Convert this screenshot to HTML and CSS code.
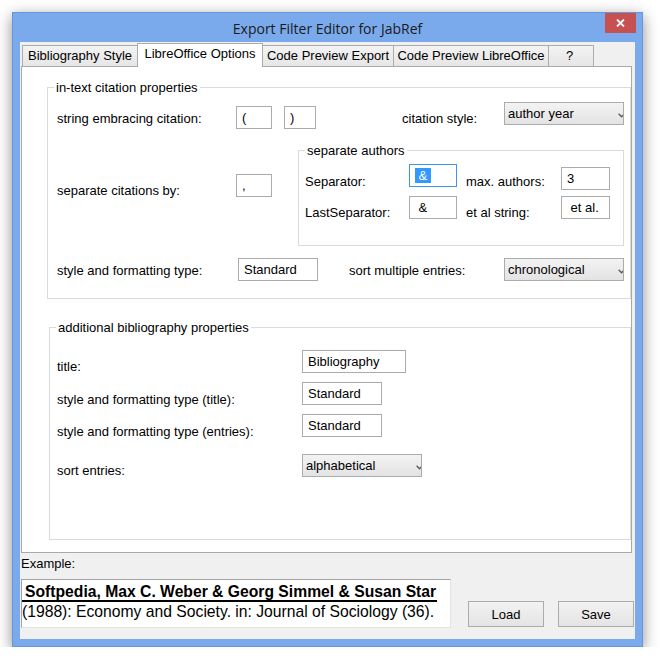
FILE: index.html
```html
<!DOCTYPE html>
<html>
<head>
<meta charset="utf-8">
<title>Export Filter Editor for JabRef</title>
<link rel="stylesheet" href="styles.css">
</head>
<body>
<div class="window">
  <div class="titlebar">
    <div></div>
    <div class="title">Export Filter Editor for JabRef</div>
    <div class="tb-right">
      <div class="close"><svg width="9" height="8" viewBox="0 0 9 8"><path d="M1 0.5 L8 7.5 M8 0.5 L1 7.5" stroke="#fff" stroke-width="1.8" fill="none"/></svg></div>
    </div>
  </div>
  <div class="client">
    <div class="tabs">
      <div class="tab t1">Bibliography Style</div>
      <div class="tab t2 active">LibreOffice Options</div>
      <div class="tab t3">Code Preview Export</div>
      <div class="tab t4">Code Preview LibreOffice</div>
      <div class="tab t5">?</div>
    </div>
    <div class="panel">
      <div class="group g1">
        <div class="legend">in-text citation properties</div>
        <div class="row ra">
          <div class="lbl w179 mt9">string embracing citation:</div>
          <div class="in w36 mt4">(</div>
          <div class="in w32 mt4 ml12">)</div>
          <div class="lbl w102 ml86 mt9">citation style:</div>
          <div class="sel"><span class="sel-text">author year</span><svg class="chev" width="7" height="5" viewBox="0 0 7 5"><path d="M0.6 0.8 L3.5 3.8 L6.4 0.8" stroke="#5a5a5a" stroke-width="1.3" fill="none"/></svg></div>
        </div>
        <div class="row rb">
          <div class="lbl w179 mt33">separate citations by:</div>
          <div class="in w36 mt24">,</div>
          <div class="group sub">
            <div class="legend">separate authors</div>
            <div class="srow s1">
              <div class="lbl w104 mt10">Separator:</div>
              <div class="in w48 focus"><span class="hl"> &amp; </span></div>
              <div class="lbl w95 ml9 mt10">max. authors:</div>
              <div class="in w49 mt3">3</div>
            </div>
            <div class="srow s2">
              <div class="lbl w104 mt9">LastSeparator:</div>
              <div class="in w48"> &amp;</div>
              <div class="lbl w95 ml9 mt9">et al string:</div>
              <div class="in w49"> et al.</div>
            </div>
          </div>
        </div>
        <div class="row rc">
          <div class="lbl w181 mt5">style and formatting type:</div>
          <div class="in w80">Standard</div>
          <div class="lbl w155 ml31 mt5">sort multiple entries:</div>
          <div class="sel"><span class="sel-text">chronological</span><svg class="chev" width="7" height="5" viewBox="0 0 7 5"><path d="M0.6 0.8 L3.5 3.8 L6.4 0.8" stroke="#5a5a5a" stroke-width="1.3" fill="none"/></svg></div>
        </div>
      </div>

      <div class="group g2">
        <div class="legend">additional bibliography properties</div>
        <div class="row r1">
          <div class="lbl w245 mt9">title:</div>
          <div class="in w104">Bibliography</div>
        </div>
        <div class="row r2">
          <div class="lbl w245 mt10">style and formatting type (title):</div>
          <div class="in w80">Standard</div>
        </div>
        <div class="row r3">
          <div class="lbl w245 mt10">style and formatting type (entries):</div>
          <div class="in w80">Standard</div>
        </div>
        <div class="row r4">
          <div class="lbl w245 mt9">sort entries:</div>
          <div class="sel"><span class="sel-text">alphabetical</span><svg class="chev" width="7" height="5" viewBox="0 0 7 5"><path d="M0.6 0.8 L3.5 3.8 L6.4 0.8" stroke="#5a5a5a" stroke-width="1.3" fill="none"/></svg></div>
        </div>
      </div>
    </div>

    <div class="bottom">
      <div class="excol">
        <div class="exlabel">Example:</div>
        <div class="exbox">
          <div class="ex1">Softpedia, Max C. Weber &amp; Georg Simmel &amp; Susan Star</div>
          <div class="ex2">(1988): Economy and Society. in: Journal of Sociology (36).</div>
        </div>
      </div>
      <div class="btn load">Load</div>
      <div class="btn save">Save</div>
    </div>
  </div>
</div>
</body>
</html>
```
FILE: styles.css
```css
html, body {
  margin: 0;
  padding: 0;
  background: #ffffff;
}
body {
  font-family: "Liberation Sans", Arial, sans-serif;
  font-size: 13px;
  color: #000;
}

.window {
  box-sizing: border-box;
  width: 631px;
  height: 635px;
  margin: 12px 0 0 12px;
  background: #7aaaec;
  border: 1px solid #6497dc;
  padding: 0 7px 7px 7px;
  display: flex;
  flex-direction: column;
  box-shadow: 0 4px 14px rgba(0, 0, 0, 0.45);
}

.titlebar {
  height: 29px;
  margin: 0 -7px;
  display: grid;
  grid-template-columns: 1fr auto 1fr;
  align-items: start;
}
.title {
  font-family: "Open Sans", "Noto Sans", sans-serif;
  font-size: 14px;
  line-height: 31px;
  color: #1a1a1a;
  white-space: nowrap;
}
.tb-right {
  justify-self: end;
  padding-right: 6px;
}
.close {
  width: 31px;
  height: 20px;
  background: #c75050;
  display: flex;
  align-items: center;
  justify-content: center;
}

.client {
  flex: 1;
  background: #f0f0f0;
  padding: 1px 0 0 1px;
  display: flex;
  flex-direction: column;
}

.tabs {
  display: flex;
  align-items: flex-end;
  height: 23px;
  padding-left: 1px;
}
.tab {
  box-sizing: border-box;
  height: 21px;
  border: 1px solid #acacac;
  border-bottom: none;
  background: linear-gradient(#f3f3f3, #e6e6e6);
  text-align: center;
  line-height: 20px;
  margin-right: -1px;
  white-space: nowrap;
}
.tab.active {
  height: 24px;
  background: #fff;
  margin-bottom: -1px;
  position: relative;
  z-index: 1;
  line-height: 19px;
}
.t1 { width: 116px; }
.t2 { width: 126px; }
.t3 { width: 132px; }
.t4 { width: 156px; }
.t5 { width: 46px; text-indent: -3px; }

.panel {
  box-sizing: border-box;
  width: 611px;
  height: 487px;
  background: #fff;
  border: 1px solid #a9a9a9;
}

.group {
  position: relative;
  box-sizing: border-box;
  border: 1px solid #dadada;
}
.legend {
  position: absolute;
  top: -8px;
  left: 6px;
  padding: 0 2px;
  background: #fff;
  line-height: 16px;
  white-space: nowrap;
}

.g1 {
  margin: 20px 0 0 25px;
  height: 212px;
}
.g2 {
  margin: 28px 0 0 27px;
  height: 213px;
}

.row {
  display: flex;
  align-items: flex-start;
}
.g1 .row { padding-left: 9px; }
.g2 .row { padding-left: 7px; height: 23px; }

.ra { margin-top: 14px; height: 27px; }
.rb { margin-top: 21px; height: 96px; }
.rc { margin-top: 12px; height: 23px; }

.r1 { margin-top: 22px; }
.r2 { margin-top: 9px; }
.r3 { margin-top: 9px; }
.r4 { margin-top: 17px; }

.sub {
  width: 326px;
  height: 96px;
  margin-left: 26px;
}
.srow {
  display: flex;
  align-items: flex-start;
  padding-left: 6px;
}
.s1 { margin-top: 13px; height: 27px; }
.s2 { margin-top: 5px; height: 23px; }

.lbl {
  line-height: 15px;
  white-space: nowrap;
  flex: none;
}

.in {
  box-sizing: border-box;
  height: 23px;
  border: 1px solid #ababab;
  background: #fff;
  padding-left: 5px;
  line-height: 21px;
  white-space: pre;
  overflow: hidden;
  flex: none;
}
.in.focus {
  border-color: #3b94f0;
}
.hl {
  background: #3399ff;
  color: #fff;
}

.sel {
  box-sizing: border-box;
  width: 120px;
  height: 23px;
  border: 1px solid #acacac;
  background: linear-gradient(#f3f3f3, #e3e3e3);
  padding-left: 3px;
  display: flex;
  align-items: center;
  overflow: hidden;
  flex: none;
}
.sel-text {
  flex: 1;
  line-height: 15px;
  white-space: nowrap;
}
.chev {
  flex: none;
  margin-right: -2px;
  margin-top: 3px;
}

.w32 { width: 32px; }
.w36 { width: 36px; }
.w48 { width: 48px; }
.w49 { width: 49px; }
.w80 { width: 80px; }
.w95 { width: 95px; }
.w102 { width: 102px; }
.w104 { width: 104px; }
.w155 { width: 155px; }
.w179 { width: 179px; }
.w181 { width: 181px; }
.w245 { width: 245px; }

.ml9 { margin-left: 9px; }
.ml12 { margin-left: 12px; }
.ml31 { margin-left: 31px; }
.ml86 { margin-left: 86px; }

.mt3 { margin-top: 3px; }
.mt4 { margin-top: 4px; }
.mt5 { margin-top: 5px; }
.mt9 { margin-top: 9px; }
.mt10 { margin-top: 10px; }
.mt24 { margin-top: 24px; }
.mt33 { margin-top: 33px; }

.bottom {
  display: flex;
  align-items: flex-end;
}
.excol {
  width: 430px;
}
.exlabel {
  margin-top: 3px;
  line-height: 15px;
}
.exbox {
  box-sizing: border-box;
  width: 430px;
  height: 49px;
  margin-top: 8px;
  background: #fff;
  border: 1px solid;
  border-color: #a3a3a3 #e2e2e2 #e2e2e2 #a3a3a3;
  padding-top: 3px;
  font-size: 15.7px;
  white-space: nowrap;
}
.ex1 {
  display: inline-block;
  font-weight: bold;
  line-height: 17px;
  padding: 0 1px 0 3px;
  border-bottom: 2px solid #000;
  vertical-align: top;
}
.ex2 {
  line-height: 19px;
}

.btn {
  box-sizing: border-box;
  width: 76px;
  height: 26px;
  margin-bottom: 1px;
  border: 1px solid #acacac;
  background: linear-gradient(#f2f2f2, #e4e4e4);
  display: flex;
  align-items: center;
  justify-content: center;
  flex: none;
}
.load { margin-left: 17px; }
.save { margin-left: 14px; }
```
